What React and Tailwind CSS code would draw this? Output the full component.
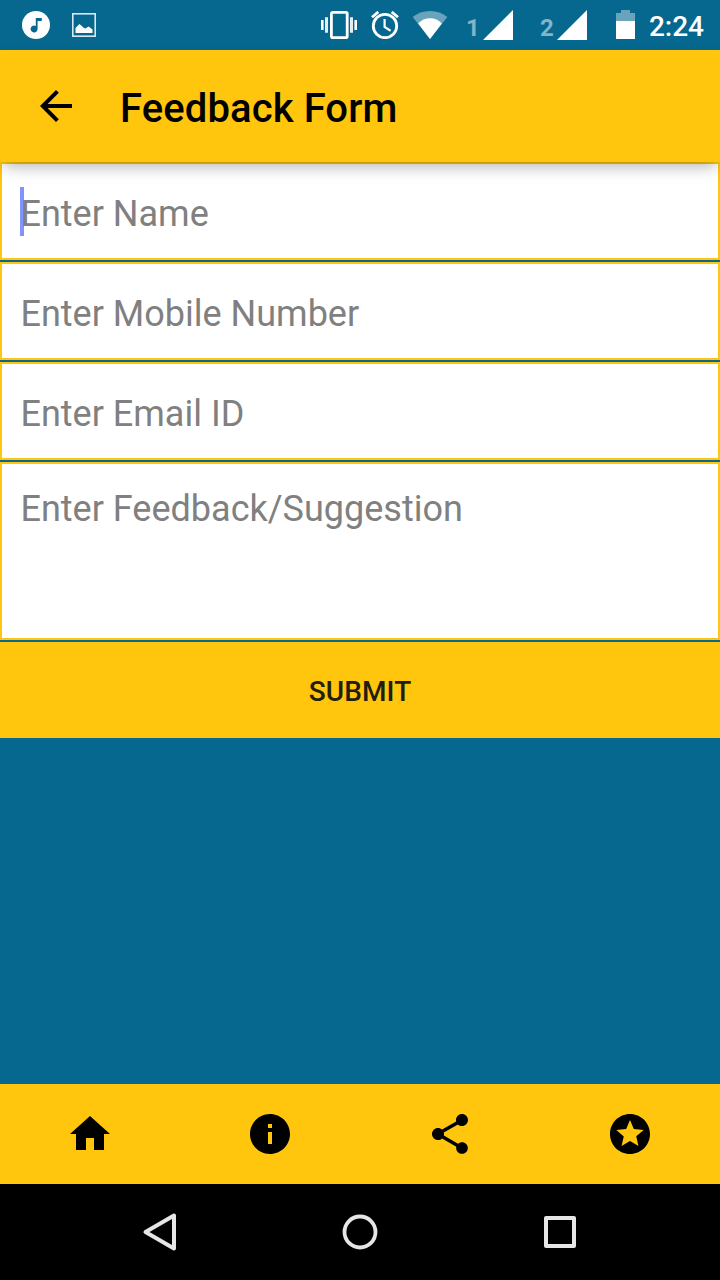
import React from "react";

const NAV_ICONS = [
  { label: "Home", d: "M10 20v-6h4v6h5v-8h3L12 3 2 12h3v8z" },
  {
    label: "About",
    d: "M12 2C6.48 2 2 6.48 2 12s4.48 10 10 10 10-4.48 10-10S17.52 2 12 2zm1 15h-2v-6h2v6zm0-8h-2V7h2v2z",
  },
  {
    label: "Share",
    d: "M18 16.08c-.76 0-1.44.3-1.96.77L8.91 12.7c.05-.23.09-.46.09-.7s-.04-.47-.09-.7l7.05-4.11c.54.5 1.25.81 2.04.81 1.66 0 3-1.34 3-3s-1.34-3-3-3-3 1.34-3 3c0 .24.04.47.09.7L8.04 9.81C7.5 9.31 6.79 9 6 9c-1.66 0-3 1.34-3 3s1.34 3 3 3c.79 0 1.5-.31 2.04-.81l7.12 4.16c-.05.21-.08.43-.08.65 0 1.61 1.31 2.92 2.92 2.92s2.92-1.31 2.92-2.92-1.31-2.92-2.92-2.92z",
  },
  {
    label: "Rate",
    d: "M11.99 2C6.47 2 2 6.48 2 12s4.47 10 9.99 10C17.52 22 22 17.52 22 12S17.52 2 11.99 2zm4.24 16L12 15.45 7.77 18l1.12-4.81-3.73-3.23 4.92-.42L12 5l1.92 4.53 4.92.42-3.73 3.23L16.23 18z",
  },
];

function StatusBar() {
  return (
    <div className="flex h-[50px] items-center pl-[22px] pr-4 text-white">
      <svg className="h-7 w-7" viewBox="0 0 28 28">
        <circle cx="14" cy="14" r="14" fill="#fff" />
        <path d="M13.8 7h6v3h-4.200v8a3.500 3.500 0 1 1-1.800-3.100z" fill="#06688f" />
      </svg>
      <svg className="ml-[22px] h-6 w-6" viewBox="0 0 24 24">
        <rect x="0.8" y="0.8" width="22.4" height="22.4" fill="none" stroke="#d9e8ee" strokeWidth="1.6" />
        <path d="M3.5 20v-5l4-4 4.5 4 1.5.5 3-2 4 3V20z" fill="#fff" />
      </svg>
      <div className="flex-1" />
      <svg className="h-7 w-9" viewBox="0 0 36 28">
        <rect x="10.4" y="1.4" width="15.8" height="25.2" rx="1.4" fill="none" stroke="#fff" strokeWidth="2.8" />
        <path d="M0 9h2.6v10H0zM33.4 9H36v10h-2.6z" fill="#fff" />
        <path d="M4 6.300h3v15.400H4zM29 6.300h3v15.400h-3z" fill="#e3eef2" />
      </svg>
      <svg className="ml-[14px] h-7 w-7" viewBox="0 0 28 28" fill="none" stroke="#fff">
        <circle cx="14" cy="15" r="11.7" strokeWidth="2.8" />
        <path d="M13.6 8v8l6 3.7" strokeWidth="2.2" />
        <path d="M1 6.200L7.300.900M27 6.200L20.700.900" strokeWidth="2.8" />
      </svg>
      <svg className="ml-[13px] h-7 w-[36px]" viewBox="0 0 36 28">
        <path d="M18 28L.7 6C5.500 2.300 11.500 0 18 0s12.500 2.300 17.300 6z" fill="#6aa4bc" />
        <path d="M18 28L6.200 12.600C9.500 9 13.500 7.200 18 7.200s8.500 1.800 11.800 5.400z" fill="#fff" />
      </svg>
      <span className="ml-[18px] w-[17px] pt-[5px] text-[24px] font-bold leading-none text-[#83b4c7]">1</span>
      <svg className="h-[30px] w-[30px]" viewBox="0 0 30 30">
        <path d="M0 30L30 0v30z" fill="#fff" />
      </svg>
      <span className="ml-[27px] w-[17px] pt-[5px] text-[24px] font-bold leading-none text-[#83b4c7]">2</span>
      <svg className="h-[30px] w-[30px]" viewBox="0 0 30 30">
        <path d="M0 30L30 0v30z" fill="#fff" />
      </svg>
      <svg className="mb-px ml-[29px] h-[29px] w-[19px]" viewBox="0 0 19 29">
        <path d="M0 3h5V0h9v3h5v8H0z" fill="#6aa4bc" />
        <path d="M0 11h19v18H0z" fill="#fff" />
      </svg>
      <span className="ml-[14px] pt-[3px] text-[28px] font-medium leading-none">2:24</span>
    </div>
  );
}

function Field({ placeholder }) {
  return (
    <input
      placeholder={placeholder}
      className="block h-[98px] w-full border-2 border-[#ffc60d] bg-white px-[18.5px] pt-1.5 text-[36px] text-black outline-none placeholder:text-[#808080] placeholder:opacity-100"
    />
  );
}

export default function App() {
  return (
    <div className="flex h-[1280px] w-[720px] flex-col overflow-hidden bg-[#06688f] font-['Roboto',sans-serif]">
      <StatusBar />
      <header className="relative z-10 flex h-28 items-center bg-[#ffc60d] pl-8 shadow-[0_7px_16px_-4px_rgba(0,0,0,0.34)]">
        <svg className="h-12 w-12" viewBox="0 0 24 24">
          <path d="M20 11H7.830l5.590-5.590L12 4l-8 8 8 8 1.410-1.410L7.830 13H20v-2z" />
        </svg>
        <h1 className="ml-10 pt-1.5 text-[40px] font-medium leading-none tracking-[0.1px] text-black">Feedback Form</h1>
      </header>
      <main className="flex flex-1 flex-col gap-0.5">
        <div className="relative">
          <Field placeholder="Enter Name" />
          <span className="absolute left-5 top-[25px] h-[49px] w-1 bg-[#3d5afe]/65" />
        </div>
        <Field placeholder="Enter Mobile Number" />
        <Field placeholder="Enter Email ID" />
        <textarea
          placeholder="Enter Feedback/Suggestion"
          className="block h-[178px] w-full resize-none border-2 border-[#ffc60d] bg-white px-[18.5px] pt-[24px] text-[36px] leading-[42px] text-black outline-none placeholder:text-[#808080] placeholder:opacity-100"
        />
        <button className="h-24 w-full bg-[#ffc60d] pt-[3px] text-[28px] font-medium tracking-[0.1px] text-[#221d0c]">SUBMIT</button>
      </main>
      <nav className="grid h-[100px] grid-cols-4 place-items-center bg-[#ffc60d]">
        {NAV_ICONS.map((icon) => (
          <button key={icon.label} aria-label={icon.label}>
            <svg className="h-12 w-12" viewBox="0 0 24 24">
              <path d={icon.d} />
            </svg>
          </button>
        ))}
      </nav>
      <div className="flex h-24 items-center justify-center gap-[152px] bg-black">
        <svg className="h-12 w-12" viewBox="0 0 48 48" fill="none" stroke="#e6e6e6" strokeWidth="4" strokeLinejoin="round">
          <path d="M9.500 24L38 7.500v33z" />
        </svg>
        <svg className="h-12 w-12" viewBox="0 0 48 48" fill="none" stroke="#e6e6e6" strokeWidth="3.800">
          <circle cx="24" cy="24" r="15.500" />
        </svg>
        <svg className="h-12 w-12" viewBox="0 0 48 48" fill="none" stroke="#e6e6e6" strokeWidth="4" strokeLinejoin="round">
          <rect x="10" y="10" width="28" height="28" />
        </svg>
      </div>
    </div>
  );
}
